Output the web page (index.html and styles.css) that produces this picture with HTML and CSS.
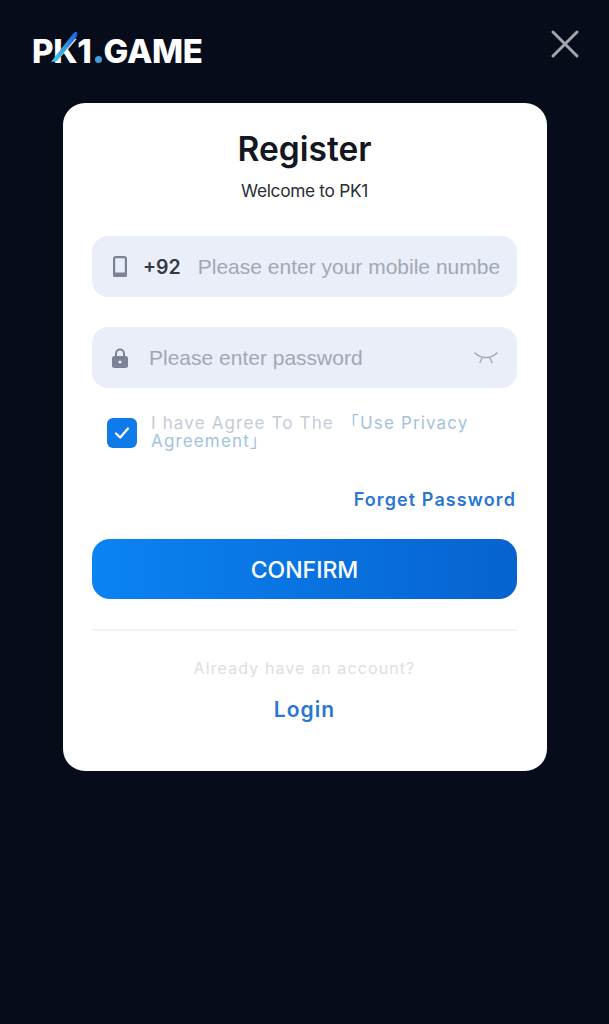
FILE: index.html
```html
<!DOCTYPE html>
<html lang="en">
  <head>
    <meta charset="UTF-8" />
    <meta name="viewport" content="width=device-width, initial-scale=1.0" />
    <title>Register</title>
    <link rel="stylesheet" href="styles.css">
  </head>
  <body>
    <header class="topbar">
      <div class="logo">
        <span>PK1</span><span class="logo-dot"></span><span>GAME</span>
        <svg class="logo-streak" width="28" height="32" viewBox="0 0 28 32">
          <defs>
            <linearGradient id="streak" x1="0" y1="1" x2="1" y2="0">
              <stop offset="0" stop-color="#46d4e6" />
              <stop offset="1" stop-color="#1a5fe0" />
            </linearGradient>
          </defs>
          <path d="M0 31 L21 4 Q24 0 26 1 Q27 3 25 7 L6 30 Z" fill="url(#streak)" />
        </svg>
      </div>
      <button class="close" type="button" aria-label="Close">
        <svg width="30" height="30" viewBox="0 0 30 30">
          <path d="M3 3 L27 27 M27 3 L3 27" stroke="#a3a6ac" stroke-width="3" stroke-linecap="round" />
        </svg>
      </button>
    </header>

    <main class="card">
      <h2>Register</h2>
      <p class="welcome">Welcome to PK1</p>

      <form class="form">
        <div class="field field-phone">
          <svg class="icon-phone" width="14" height="21" viewBox="0 0 14 21">
            <rect x="1.1" y="1.1" width="11.8" height="18.8" rx="1.8" fill="none" stroke="#7d8296" stroke-width="2.2" />
            <rect x="0" y="16.5" width="14" height="4.5" rx="1.5" fill="#7d8296" />
          </svg>
          <span class="prefix">+92</span>
          <input class="field-input" type="tel" placeholder="Please enter your mobile number" />
        </div>

        <div class="field field-password">
          <svg class="icon-lock" width="16" height="20" viewBox="0 0 16 20">
            <path d="M4 9 V5.5 a4 4 0 0 1 8 0 V9" fill="none" stroke="#7d8296" stroke-width="2" />
            <rect x="0" y="8" width="16" height="12" rx="2.5" fill="#7d8296" />
            <circle cx="8" cy="14" r="1.6" fill="#e9eef9" />
          </svg>
          <input class="field-input" type="password" placeholder="Please enter password" />
          <svg class="icon-eye" width="24" height="13" viewBox="0 0 24 13">
            <path d="M1 2 C7 8 17 8 23 2 M1 2 L5 5 M23 2 L19 5 M8 7 L6 11.5 M16 7 L18 11.5" fill="none" stroke="#a9acb6" stroke-width="1.5" stroke-linecap="round" />
          </svg>
        </div>

        <label class="agree">
          <span class="checkbox">
            <svg width="16" height="14" viewBox="0 0 16 14">
              <path d="M2 7.5 L6.2 11.5 L14 2.5" fill="none" stroke="#ffffff" stroke-width="2.2" stroke-linecap="round" stroke-linejoin="round" />
            </svg>
          </span>
          <span class="agree-text">I have Agree To The <a class="agree-link">「Use Privacy Agreement」</a></span>
        </label>

        <a class="forget">Forget Password</a>

        <button class="confirm" type="button">CONFIRM</button>
      </form>

      <div class="account">
        <p class="account-text">Already have an account?</p>
        <a class="login">Login</a>
      </div>
    </main>
  </body>
</html>
```

FILE: styles.css
```css
body {
  font-family: Inter, "Noto Sans CJK SC", sans-serif;
  margin: 0;
  min-height: 1024px;
  background-color: #070c1b;
  color: #14171f;
  box-sizing: border-box;
}
.topbar {
  display: flex;
  justify-content: space-between;
  align-items: center;
  height: 103px;
  padding: 0 29px 15px 32px;
  box-sizing: border-box;
}
.logo {
  position: relative;
  display: flex;
  align-items: baseline;
  font-size: 33px;
  font-weight: 800;
  letter-spacing: -0.3px;
  color: #ffffff;
  padding-top: 13px;
}
.logo-dot {
  width: 7px;
  height: 7px;
  margin: 0 2px 0 3px;
  border-radius: 50%;
  background-color: #3f9fd8;
}
.logo-streak {
  position: absolute;
  left: 19px;
  top: 13px;
}
.close {
  padding: 0;
  border: none;
  background: none;
  display: flex;
}
.card {
  width: 484px;
  height: 668px;
  margin-left: 63px;
  padding: 0 30px 0 29px;
  box-sizing: border-box;
  background-color: #ffffff;
  border-radius: 22px;
}
h2 {
  margin: 0;
  padding-top: 26px;
  font-size: 33.5px;
  line-height: 40px;
  font-weight: 600;
  text-align: center;
}
.welcome {
  margin: 10px 0 0;
  font-size: 17.3px;
  line-height: 24px;
  letter-spacing: -0.3px;
  text-align: center;
  color: #2a2d35;
}
.form {
  display: flex;
  flex-direction: column;
  margin-top: 33px;
}
.field {
  display: flex;
  align-items: center;
  height: 61px;
  padding: 0 16px 0 20px;
  margin-bottom: 30px;
  background-color: #e9eef9;
  border-radius: 16px;
  box-sizing: border-box;
}
.field-phone {
  padding-left: 21px;
}
.prefix {
  margin-left: 16px;
  font-size: 19.5px;
  font-weight: 600;
  color: #343843;
}
.field-input {
  flex: 1;
  min-width: 0;
  margin-left: 17px;
  padding: 0;
  border: none;
  background: transparent;
  font-family: "Liberation Sans", Arial, sans-serif;
  font-size: 21px;
  color: #343843;
}
.field-input::placeholder {
  color: #a3a7b3;
  opacity: 1;
}
.field-password {
  padding-right: 19px;
  margin-bottom: 27px;
}
.field-password .field-input {
  margin-left: 21px;
}
.agree {
  display: flex;
  align-items: center;
  gap: 14px;
  padding-left: 15px;
  margin-bottom: 39px;
}
.checkbox {
  flex: none;
  display: flex;
  align-items: center;
  justify-content: center;
  width: 30px;
  height: 30px;
  background-color: #0f7bea;
  border-radius: 6px;
}
.agree-text {
  width: 340px;
  font-size: 17px;
  line-height: 17.5px;
  letter-spacing: 1.15px;
  color: #c3ccd6;
}
.agree-link {
  margin-left: 2px;
  color: #a3c3db;
}
.forget {
  align-self: flex-end;
  margin-right: 1px;
  font-size: 18px;
  line-height: 22px;
  font-weight: 600;
  letter-spacing: 1.1px;
  color: #2a76d2;
}
.confirm {
  height: 60px;
  margin-top: 28px;
  padding: 2px 0 0;
  border: none;
  border-radius: 18px;
  background: linear-gradient(90deg, #0b83f2, #0663cf);
  color: #ffffff;
  font-family: inherit;
  font-size: 23px;
  font-weight: 500;
}
.account {
  margin-top: 30px;
  padding-top: 26px;
  border-top: 2px solid #f2f3f6;
  text-align: center;
}
.account-text {
  margin: 0;
  font-size: 16px;
  line-height: 22px;
  letter-spacing: 1.1px;
  color: #dcdee2;
}
.login {
  display: block;
  margin-top: 17px;
  font-size: 21px;
  line-height: 28px;
  font-weight: 600;
  letter-spacing: 1.1px;
  color: #2a76d2;
}
```
